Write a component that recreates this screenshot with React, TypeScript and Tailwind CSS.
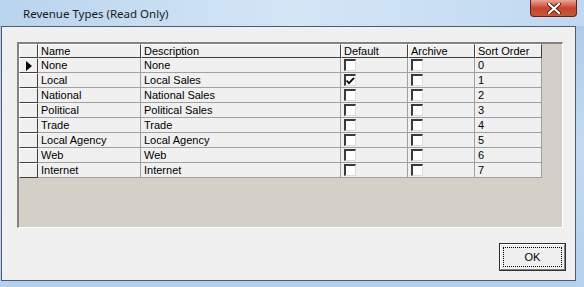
import React from "react";

const rows = [
  { name: "None", desc: "None", def: false, order: "0" },
  { name: "Local", desc: "Local Sales", def: true, order: "1" },
  { name: "National", desc: "National Sales", def: false, order: "2" },
  { name: "Political", desc: "Political Sales", def: false, order: "3" },
  { name: "Trade", desc: "Trade", def: false, order: "4" },
  { name: "Local Agency", desc: "Local Agency", def: false, order: "5" },
  { name: "Web", desc: "Web", def: false, order: "6" },
  { name: "Internet", desc: "Internet", def: false, order: "7" },
];

function Check({ checked }: { checked: boolean }) {
  return (
    <div className="mt-[1px] ml-[3px] w-[12px] h-[12px] border-t-2 border-l-2 border-[#3a3a3a] border-b border-r border-b-[#dcdcdc] border-r-[#dcdcdc] bg-white flex items-center justify-center">
      {checked && (
        <svg width="9" height="8" viewBox="0 0 9 8">
          <path d="M0.5 3.5 L3 6.2 L8 0.8" stroke="#000" strokeWidth="1.7" fill="none" />
        </svg>
      )}
    </div>
  );
}

const cols = "grid grid-cols-[19px_103px_200px_67px_67px_67px]";
const cell = "h-[15px] border-r border-b border-[#a0a0a0] text-[11px] leading-[14px] pl-[3px] whitespace-nowrap overflow-hidden";

export default function App() {
  return (
    <div
      className="w-[584px] h-[287px] flex flex-col bg-gradient-to-b from-[#a8c8e8] via-[#c3dbf1] to-[#b4d0ec] overflow-hidden"
      style={{ fontFamily: '"Liberation Sans", Arial, sans-serif' }}
    >
      <div className="h-[26px] flex items-start shrink-0 bg-gradient-to-r from-[#b9d4ee] via-[#d4e6f6] to-[#c0d8f0]">
        <div
          className="pl-[23px] pt-[5px] text-[11.5px] text-[#1a1a1a]"
          style={{ fontFamily: '"Noto Sans", "Open Sans", sans-serif' }}
        >
          Revenue Types (Read Only)
        </div>
        <div className="ml-auto mr-[7px] w-[47px] h-[17px] rounded-b-[4px] border border-t-0 border-[#6b1d14] bg-gradient-to-b from-[#e8a494] via-[#c8422f] to-[#c05a3e] flex items-center justify-center">
          <svg width="14" height="11" viewBox="0 0 14 11">
            <path d="M2 1 L12 10 M12 1 L2 10" stroke="#5a1a10" strokeWidth="4" strokeLinecap="round" />
            <path d="M2 1 L12 10 M12 1 L2 10" stroke="#ffffff" strokeWidth="2.2" strokeLinecap="round" />
          </svg>
        </div>
      </div>
      <div className="flex-1 ml-[1px] mr-[8px] mb-[6px] border border-[#4d5d6f] bg-[#f0f0f0] flex flex-col">
        <div className="pl-[15px] pt-[15px]">
          <div className="w-[546px] h-[186px] border-t-2 border-l-2 border-t-[#828282] border-l-[#828282] border-b border-r border-b-white border-r-white bg-[#d4d0c8]">
            <div className={cols}>
              <div className="h-[14px] bg-[#f0f0f0] border-t border-l border-white border-r border-b border-r-[#404040] border-b-[#404040]" />
              {["Name", "Description", "Default", "Archive", "Sort Order"].map((h) => (
                <div
                  key={h}
                  className="h-[14px] bg-[#f0f0f0] border-t border-l border-white border-r border-b border-r-[#404040] border-b-[#404040] text-[11px] leading-[12px] pl-[2px] whitespace-nowrap"
                >
                  {h}
                </div>
              ))}
              {rows.map((r, i) => (
                <React.Fragment key={r.name}>
                  <div className="h-[15px] bg-[#f0f0f0] border-t border-l border-white border-r border-b border-r-[#404040] border-b-[#404040] flex items-center pl-[6px]">
                    {i === 0 && (
                      <svg width="6" height="10" viewBox="0 0 6 10">
                        <path d="M0 0 L6 5 L0 10 Z" fill="#000" />
                      </svg>
                    )}
                  </div>
                  <div className={`${cell} bg-[#f0f0f0]`}>{r.name}</div>
                  <div className={`${cell} bg-[#f0f0f0]`}>{r.desc}</div>
                  <div className={`${cell} bg-[#f0f0f0] !pl-0`}>
                    <Check checked={r.def} />
                  </div>
                  <div className={`${cell} bg-[#f0f0f0] !pl-0`}>
                    <Check checked={false} />
                  </div>
                  <div className={`${cell} bg-[#f0f0f0]`}>{r.order}</div>
                </React.Fragment>
              ))}
            </div>
          </div>
        </div>
        <div className="flex justify-end pr-[9px] pt-[15px]">
          <div className="w-[67px] h-[28px] border border-[#303030] bg-[#f0f0f0]">
            <div className="w-full h-full border-t border-l border-white border-r border-b border-r-[#808080] border-b-[#808080] p-[2px]">
              <div className="w-full h-full border border-dotted border-black flex items-center justify-center text-[11px]">
                OK
              </div>
            </div>
          </div>
        </div>
      </div>
    </div>
  );
}
